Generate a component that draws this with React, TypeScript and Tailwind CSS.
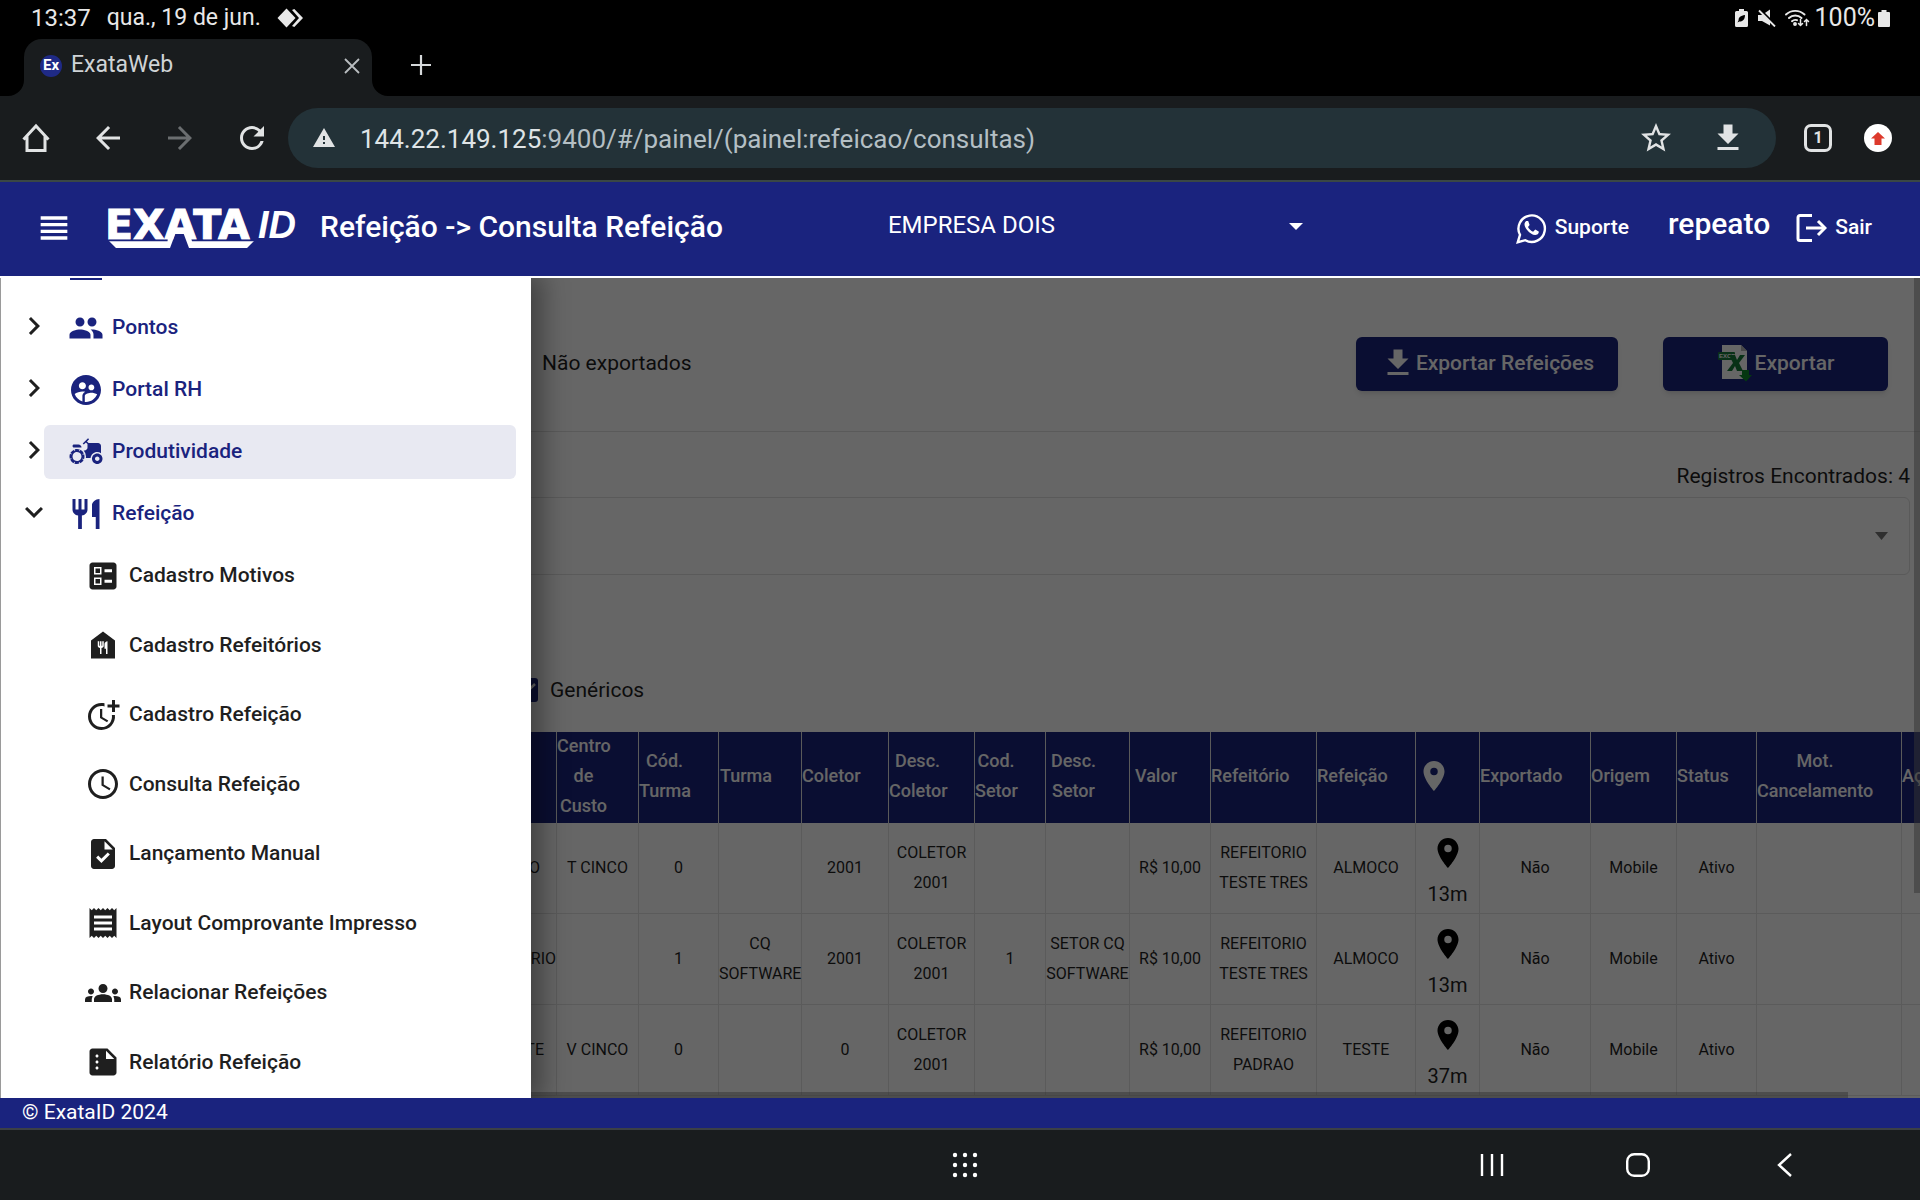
import React from "react";
import type { IconType } from "react-icons";
import {
  MdAccessTime,
  MdAgriculture,
  MdArrowBack,
  MdArrowForward,
  MdBallot,
  MdChevronRight,
  MdExpandMore,
  MdFileDownload,
  MdFoodBank,
  MdGroups,
  MdMoreTime,
  MdPeople,
  MdPlace,
  MdReceipt,
  MdRefresh,
  MdRestaurant,
  MdStarBorder,
  MdSummarize,
  MdSupervisedUserCircle,
  MdTask,
  MdViewHeadline,
  MdWarning,
} from "react-icons/md";

/* ---------- Android status bar ---------- */

function StatusBar() {
  return (
    <div className="flex h-9 items-center pl-[31px] pr-[30px] text-[#e8e8e8]">
      <span className="text-[24px] leading-9">13:37</span>
      <span className="ml-4 text-[23px] leading-9">qua., 19 de jun.</span>
      <svg className="ml-4" width="28" height="20" viewBox="0 0 28 20" fill="currentColor">
        <path d="M9.500 0.500 18.500 10 9.500 19.500 0.500 10z" />
        <path d="M15 2 17.300 1 26 10 17.300 19 15 18 22 10z" />
      </svg>
      <div className="ml-auto flex items-center">
        <svg width="13" height="18" viewBox="0 0 13 18" fill="currentColor">
          <path d="M4 0h5v2h2.500a1.500 1.500 0 0 1 1.500 1.500v13A1.500 1.500 0 0 1 11.500 18h-10A1.500 1.500 0 0 1 0 16.500v-13A1.500 1.500 0 0 1 1.500 2H4z" />
          <path d="M10 6C5.500 6.500 3.500 8.500 3.600 11.300L2.500 13.500 4.200 12.500C7.500 13 10 10.500 10 6z" fill="#000" />
        </svg>
        <svg className="ml-[10px]" width="18" height="18" viewBox="0 0 18 18" fill="currentColor">
          <path d="M0 6h4L12 0.500V16.500L4 12H0z" />
          <path d="M1 0 18 17" stroke="#000" strokeWidth="3" />
          <path d="M1 1.500 17 17.500" stroke="currentColor" strokeWidth="1.800" />
        </svg>
        <svg className="ml-[9px]" width="25" height="18" viewBox="0 0 25 18" fill="none" stroke="currentColor" strokeWidth="1.900" strokeLinecap="round">
          <path d="M1 5.500a13.500 13.500 0 0 1 18.500 0M4 9a9 9 0 0 1 12.500 0M7 12.200a5 5 0 0 1 5-1" />
          <circle cx="10" cy="15" r="1" fill="currentColor" />
          <path d="M15.500 10.500v6M13.500 14.500l2 2 2-2M21.500 16.500v-6M19.500 12.500l2-2 2 2" strokeWidth="1.500" />
        </svg>
        <span className="ml-[5px] text-[25px] leading-9">100%</span>
        <svg className="ml-[3px]" width="12" height="17" viewBox="0 0 12 17" fill="currentColor">
          <path d="M3.500 0h5v2H11a1 1 0 0 1 1 1v13a1 1 0 0 1-1 1H1a1 1 0 0 1-1-1V3a1 1 0 0 1 1-1h2.500z" />
        </svg>
      </div>
    </div>
  );
}

/* ---------- Browser chrome ---------- */

function TabStrip() {
  return (
    <div className="flex h-[60px] items-end pl-2 pt-[3px]">
      <svg width="16" height="16" viewBox="0 0 16 16" fill="#191c1e">
        <path d="M16 0v16H0A16 16 0 0 0 16 0z" />
      </svg>
      <div className="flex h-[57px] w-[348px] items-center rounded-t-[18px] bg-[#191c1e] pb-1 pl-4 pr-[10px]">
        <span className="flex size-[22px] items-center justify-center rounded-full bg-[#1f2a86] text-[15px] font-bold text-white">Ex</span>
        <span className="ml-[9px] flex-1 text-[23px] text-[#cfd3d6]">ExataWeb</span>
        <button aria-label="Fechar guia" className="p-0.5">
          <svg width="16" height="16" viewBox="0 0 16 16" stroke="#b9bdc0" strokeWidth="1.800">
            <path d="M1 1l14 14M15 1 1 15" />
          </svg>
        </button>
      </div>
      <svg width="16" height="16" viewBox="0 0 16 16" fill="#191c1e">
        <path d="M0 0v16h16A16 16 0 0 1 0 0z" />
      </svg>
      <button aria-label="Nova guia" className="ml-[22px] flex h-[57px] items-center pb-1.5">
        <svg width="22" height="22" viewBox="0 0 22 22" stroke="#d5d8da" strokeWidth="2.200">
          <path d="M11 1v20M1 11h20" />
        </svg>
      </button>
    </div>
  );
}

function Toolbar() {
  return (
    <div className="flex h-[86px] items-center border-b-2 border-[#3a4745] bg-[#191c1e] pl-[18px] pr-7 text-[#e1e3e4]">
      <div className="flex items-center gap-9">
        <button aria-label="Página inicial">
          <svg width="36" height="36" viewBox="0 0 36 36" fill="none" stroke="currentColor" strokeWidth="3">
            <path d="M5.500 19.500 18 6 30.500 19.500M9 16.500V30.500H27V16.500" />
          </svg>
        </button>
        <button aria-label="Voltar"><MdArrowBack size={36} /></button>
        <button aria-label="Avançar" className="text-[#6b6e70]"><MdArrowForward size={36} /></button>
        <button aria-label="Recarregar"><MdRefresh size={36} /></button>
      </div>
      <div className="ml-[18px] flex h-[60px] flex-1 items-center rounded-full bg-[#233238] pl-6 pr-[30px]">
        <MdWarning size={24} />
        <p className="ml-6 flex-1 pt-0.5 text-[26px] text-[#b4bfc4]">
          <span className="text-[#dfe4e6]">144.22.149.125</span>:9400/#/painel/(painel:refeicao/consultas)
        </p>
        <button aria-label="Favoritar"><MdStarBorder size={36} /></button>
        <button aria-label="Baixar" className="ml-9"><MdFileDownload size={36} /></button>
      </div>
      <button aria-label="Guias abertas" className="ml-7 flex size-7 items-center justify-center rounded-[7px] border-[3px] border-current text-[16px] font-bold leading-none">1</button>
      <button aria-label="Atualizar navegador" className="ml-8 flex size-7 items-center justify-center rounded-full bg-white">
        <svg width="14" height="13" viewBox="0 0 14 13" fill="#dd3a2c">
          <path d="M7 0 14 6.500H10.500V13H3.500V6.500H0z" />
        </svg>
      </button>
    </div>
  );
}

/* ---------- Application header ---------- */

function Logo() {
  return (
    <svg width="200" height="60" viewBox="0 0 200 60" fill="#fff" className="overflow-visible" role="img" aria-label="EXATAID">
      <text x="-3" y="41" fontFamily="DejaVu Sans" fontWeight="700" fontSize="41" stroke="#fff" strokeWidth="1">EXATA</text>
      <text x="150" y="40" fontFamily="Liberation Sans" fontWeight="700" fontStyle="italic" fontSize="38">ID</text>
      <path d="M1 43H59L65 30H78L84 43H146L139 50H81L75 34H68L62 50H8z" />
      <path d="M1 42.500H59.500M84 42.500H146" stroke="#1a237e" strokeWidth="1.600" />
    </svg>
  );
}

function AppHeader() {
  return (
    <header className="flex h-24 shrink-0 items-center border-b-2 border-white bg-[#1a237e] pb-0.5 pl-[34px] pr-12 font-medium text-white">
      <button aria-label="Menu"><MdViewHeadline size={40} /></button>
      <div className="ml-[34px]"><Logo /></div>
      <h1 className="ml-3 pb-0.5 text-[30px] leading-9">Refeição -&gt; Consulta Refeição</h1>
      <div className="relative ml-[165px] w-[415px]">
        <select aria-label="Empresa" defaultValue="dois" className="w-full appearance-none bg-transparent pb-1.5 text-[24px] font-normal leading-8 text-white outline-none">
          <option value="dois">EMPRESA DOIS</option>
        </select>
        <svg className="pointer-events-none absolute right-0 top-3.5" width="14" height="7" viewBox="0 0 14 7" fill="#fff">
          <path d="M0 0h14L7 7z" />
        </svg>
      </div>
      <a href="#suporte" className="ml-auto flex items-center gap-2 text-[21px]">
        <svg width="31" height="31" viewBox="0 0 31 31" fill="none" stroke="currentColor" strokeWidth="2.400">
          <path d="M1.800 29.200 4 21.800A13.200 13.200 0 1 1 9.300 27.200z" />
          <path d="M10.200 8c-2.500 2-2.200 5 .7 8.700 3.200 4 7.400 6.300 10.300 4.800 1.600-.9 1.800-2.400 1.500-3.100l-3.400-1.900-2.200 2.200c-2-.6-4.200-2.700-5.100-4.700l1.600-2.100L12.200 8z" fill="currentColor" stroke="none" />
        </svg>
        Suporte
      </a>
      <span className="ml-[39px] pb-2 text-[30px] leading-9">repeato</span>
      <button className="ml-[26px] flex items-center gap-2 text-[21px]">
        <svg width="31" height="28" viewBox="0 0 31 28" fill="none" stroke="currentColor" strokeWidth="3">
          <path d="M16 1.500H4A2 2 0 0 0 2 3.500V24.500A2 2 0 0 0 4 26.500H16M10 14H28" />
          <path d="M22 7 29 14 22 21" />
        </svg>
        Sair
      </button>
    </header>
  );
}

/* ---------- Navigation drawer ---------- */

const groups: { label: string; icon: IconType; open?: boolean; active?: boolean }[] = [
  { label: "Pontos", icon: MdPeople },
  { label: "Portal RH", icon: MdSupervisedUserCircle },
  { label: "Produtividade", icon: MdAgriculture, active: true },
  { label: "Refeição", icon: MdRestaurant, open: true },
];

const mealLinks: { label: string; icon: IconType }[] = [
  { label: "Cadastro Motivos", icon: MdBallot },
  { label: "Cadastro Refeitórios", icon: MdFoodBank },
  { label: "Cadastro Refeição", icon: MdMoreTime },
  { label: "Consulta Refeição", icon: MdAccessTime },
  { label: "Lançamento Manual", icon: MdTask },
  { label: "Layout Comprovante Impresso", icon: MdReceipt },
  { label: "Relacionar Refeições", icon: MdGroups },
  { label: "Relatório Refeição", icon: MdSummarize },
];

function Drawer() {
  return (
    <nav className="absolute inset-y-0 left-0 flex w-[531px] flex-col border-l border-[#9a9a9a] bg-white text-[21px] font-medium shadow-[8px_0_24px_4px_rgba(0,0,0,0.35)]">
      <div className="ml-[69px] h-0.5 w-8 shrink-0 bg-[#1a237e]" />
      <ul className="mt-[21px] flex flex-col gap-2">
        {groups.map(({ label, icon: Icon, open, active }) => (
          <li key={label} className="flex items-center pl-[15px] pr-[15px]">
            <span className="-mr-2 shrink-0 pb-1 text-[#1f1f1f]">
              {open ? <MdExpandMore size={36} /> : <MdChevronRight size={36} />}
            </span>
            <button
              aria-expanded={!!open}
              className={
                active
                  ? "flex h-[54px] flex-1 items-center gap-2 rounded-md bg-[#e8e9f2] pl-6 text-[#1a237e]"
                  : "flex h-[54px] flex-1 items-center gap-2 rounded-md pl-6 text-[#1a237e]"
              }
            >
              <Icon size={36} />
              {label}
            </button>
          </li>
        ))}
      </ul>
      <ul className="flex flex-1 flex-col pb-px">
        {mealLinks.map(({ label, icon: Icon }) => (
          <li key={label} className="flex flex-1 items-center">
            <a href="#refeicao" className="flex items-center gap-2 pl-[84px] text-[#1f1f1f]">
              <Icon size={36} />
              {label}
            </a>
          </li>
        ))}
      </ul>
    </nav>
  );
}

/* ---------- Page content ---------- */

function ExcelIcon() {
  return (
    <svg width="38" height="38" viewBox="0 0 38 38">
      <path d="M5 1H24L30 7V35H5z" fill="#fff" />
      <path d="M24 1 30 7H24z" fill="#b5b5b5" />
      <rect x="1" y="8" width="17" height="8" rx="1" fill="#1a7a3c" />
      <text x="2" y="14" fontFamily="Liberation Sans" fontWeight="700" fontSize="6" fill="#fff">EXCEL</text>
      <path d="M12 11H18L20 16 23 11H28L22 19 26 27H20L18 22 15 27H10L16 19z" fill="#157a38" />
      <path d="M25 26H32V31H35L29 37.500 22 31H25z" fill="#0e8a2c" />
    </svg>
  );
}

const columns: { title: string; width: string; pin?: boolean }[] = [
  { title: "", width: "w-[56px]" },
  { title: "Centro\nde\nCusto", width: "w-[82px]" },
  { title: "Cód.\nTurma", width: "w-[80px]" },
  { title: "Turma", width: "w-[83px]" },
  { title: "Coletor", width: "w-[87px]" },
  { title: "Desc.\nColetor", width: "w-[86px]" },
  { title: "Cod.\nSetor", width: "w-[71px]" },
  { title: "Desc.\nSetor", width: "w-[84px]" },
  { title: "Valor", width: "w-[81px]" },
  { title: "Refeitório", width: "w-[106px]" },
  { title: "Refeição", width: "w-[99px]" },
  { title: "", width: "w-[64px]", pin: true },
  { title: "Exportado", width: "w-[111px]" },
  { title: "Origem", width: "w-[86px]" },
  { title: "Status", width: "w-[80px]" },
  { title: "Mot.\nCancelamento", width: "w-[145px]" },
  { title: "Ações", width: "w-[76px]" },
];

const rows: { first: string; firstPad: string; cells: string[]; distance: string }[] = [
  { first: "O", firstPad: "pr-4", cells: ["T CINCO", "0", "", "2001", "COLETOR\n2001", "", "", "R$ 10,00", "REFEITORIO\nTESTE TRES", "ALMOCO"], distance: "13m" },
  { first: "RIO", firstPad: "pr-0", cells: ["", "1", "CQ\nSOFTWARE", "2001", "COLETOR\n2001", "1", "SETOR CQ\nSOFTWARE", "R$ 10,00", "REFEITORIO\nTESTE TRES", "ALMOCO"], distance: "13m" },
  { first: "TE", firstPad: "pr-3", cells: ["V CINCO", "0", "", "0", "COLETOR\n2001", "", "", "R$ 10,00", "REFEITORIO\nPADRAO", "TESTE"], distance: "37m" },
];

function MealsTable() {
  return (
    <table className="w-[1477px] table-fixed border-separate border-spacing-0 whitespace-pre text-center text-[16px] leading-[30px]">
      <thead>
        <tr className="h-[91px] bg-[#1a237e] text-[18px] text-white">
          {columns.map((c, i) => (
            <th key={i} className={`${c.width} border-l border-[#e0e0e0] p-0 pr-7 font-medium`}>
              <div className="-my-0.5 pb-1">{c.pin ? <MdPlace size={36} className="inline" /> : c.title}</div>
            </th>
          ))}
        </tr>
      </thead>
      <tbody>
        {rows.map((r, i) => (
          <tr key={i} className="h-[91px]">
            <td className={`${r.firstPad} border-b border-[#e4e4e4] text-right`}>{r.first}</td>
            {r.cells.map((c, j) => (
              <td key={j} className="border-b border-l border-[#e4e4e4] p-0">{c}</td>
            ))}
            <td className="border-b border-l border-[#e4e4e4] p-0">
              <div className="flex flex-col items-center gap-2 pt-2 text-[20px]">
                <MdPlace size={36} className="text-black" />
                {r.distance}
              </div>
            </td>
            {["Não", "Mobile", "Ativo", "", ""].map((c, j) => (
              <td key={j} className="border-b border-l border-[#e4e4e4] p-0">{c}</td>
            ))}
          </tr>
        ))}
      </tbody>
    </table>
  );
}

function Content() {
  return (
    <main className="h-full overflow-hidden bg-white text-[21px] leading-[30px] text-[#1f1f1f]">
      <div className="flex h-[154px] items-start border-b border-[#e0e0e0] pl-[542px] pr-8 pt-[59px]">
        <p className="flex-1 pt-[11px]">Não exportados</p>
        <button className="flex h-[54px] w-[262px] items-center justify-center rounded-md bg-[#1a237e] pb-0.5 font-medium text-white shadow-md">
          <MdFileDownload size={36} />
          Exportar Refeições
        </button>
        <button className="ml-[45px] flex h-[54px] w-[225px] items-center justify-center rounded-md bg-[#1a237e] pb-0.5 font-medium text-white shadow-md">
          <ExcelIcon />
          Exportar
        </button>
      </div>
      <p className="pb-[6px] pr-[10px] pt-[29px] text-right">Registros Encontrados: 4</p>
      <div className="pr-[10px]">
        <div className="relative rounded-md border border-[#e0e0e0]">
          <select aria-label="Filtro" className="block h-[76px] w-full appearance-none bg-transparent outline-none" />
          <svg className="pointer-events-none absolute right-[21px] top-[34px]" width="13" height="8" viewBox="0 0 13 8" fill="#757575">
            <path d="M0 0h13L6.500 8z" />
          </svg>
        </div>
      </div>
      <label className="flex items-center gap-3 pb-[27px] pl-[514px] pt-[100px]">
        <input type="checkbox" defaultChecked className="peer sr-only" />
        <span className="flex size-6 items-center justify-center rounded-[3px] bg-[#1a237e]">
          <svg width="20" height="20" viewBox="0 0 20 20" fill="none" stroke="#fff" strokeWidth="2.500">
            <path d="M2 10 7.500 15 19 4" />
          </svg>
        </span>
        Genéricos
      </label>
      <div className="overflow-hidden pl-[500px]">
        <MealsTable />
      </div>
    </main>
  );
}

/* ---------- Android navigation bar ---------- */

function SystemNav() {
  return (
    <div className="grid h-[72px] shrink-0 grid-cols-[1fr_auto_1fr] items-center border-t-2 border-[#3c4046] bg-[#191c1e] text-white">
      <span />
      <button aria-label="Aplicativos">
        <svg width="36" height="26" viewBox="0 0 36 26" fill="currentColor">
          {[3, 13, 23].map((y) => [8, 18, 28].map((x) => <circle key={`${x}-${y}`} cx={x + 5} cy={y} r="2.200" />))}
        </svg>
      </button>
      <div className="flex items-center justify-end gap-[122px] pr-[124px]">
        <button aria-label="Recentes">
          <svg width="24" height="24" viewBox="0 0 24 24" stroke="currentColor" strokeWidth="2.400">
            <path d="M2 1v22M12 1v22M22 1v22" />
          </svg>
        </button>
        <button aria-label="Início">
          <svg width="24" height="24" viewBox="0 0 24 24" fill="none" stroke="currentColor" strokeWidth="2.400">
            <rect x="1.200" y="1.200" width="21.600" height="21.600" rx="7" />
          </svg>
        </button>
        <button aria-label="Voltar">
          <svg width="24" height="24" viewBox="0 0 24 24" fill="none" stroke="currentColor" strokeWidth="2.400">
            <path d="M19 1 7 12 19 23" />
          </svg>
        </button>
      </div>
    </div>
  );
}

export default function App() {
  return (
    <div className="flex h-screen flex-col overflow-hidden bg-black font-['Roboto',sans-serif]">
      <StatusBar />
      <TabStrip />
      <Toolbar />
      <AppHeader />
      <div className="relative min-h-0 flex-1 overflow-hidden">
        <Content />
        <div className="absolute inset-0 bg-black/60" />
        <div className="absolute right-0 top-0 h-3/4 w-1.5 bg-[#333]/50" />
        <div className="absolute bottom-0 left-0 right-[72px] h-1.5 bg-[#333]/50" />
        <Drawer />
      </div>
      <footer className="shrink-0 bg-[#1a237e] pb-0.5 pl-[22px] text-[21px] leading-7 text-white">© ExataID 2024</footer>
      <SystemNav />
    </div>
  );
}
